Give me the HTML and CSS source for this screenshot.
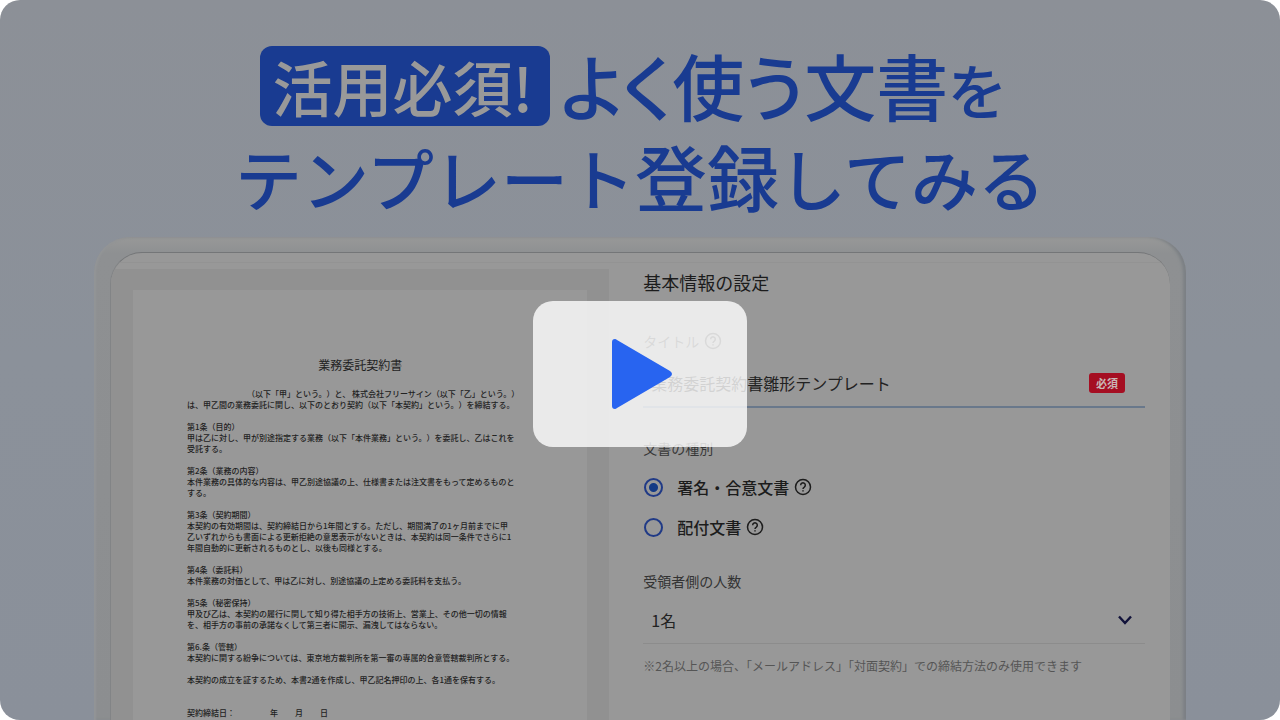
FILE: index.html
```html
<!DOCTYPE html>
<html lang="ja">
  <head>
    <meta charset="UTF-8" />
    <meta name="viewport" content="width=device-width, initial-scale=1.0" />
    <title>よく使う文書をテンプレート登録してみる</title>
    <link rel="stylesheet" href="styles.css" />
  </head>
  <body>
    <main class="player">
      <h1 class="headline">
        <span class="headline-row first">
          <span class="tag">活用必須!</span>
          <span>よく使う文書<span class="small">を</span></span>
        </span>
        <span class="headline-row second">
          <span>テンプレート<span class="kanji">登録</span>してみる</span>
        </span>
      </h1>

      <div class="tablet">
        <div class="screen">
          <!-- contract preview -->
          <section class="preview">
            <article class="paper">
              <h2>業務委託契約書</h2>
              <p><span class="blank"></span>（以下「甲」という。）と、 株式会社フリーサイン（以下「乙」という。）<br />は、甲乙間の業務委託に関し、以下のとおり契約（以下「本契約」という。）を締結する。</p>
              <p>第1条（目的）<br />甲は乙に対し、甲が別途指定する業務（以下「本件業務」という。）を委託し、乙はこれを<br />受託する。</p>
              <p>第2条（業務の内容）<br />本件業務の具体的な内容は、甲乙別途協議の上、仕様書または注文書をもって定めるものと<br />する。</p>
              <p>第3条（契約期間）<br />本契約の有効期間は、契約締結日から1年間とする。ただし、期間満了の1ヶ月前までに甲<br />乙いずれからも書面による更新拒絶の意思表示がないときは、本契約は同一条件でさらに1<br />年間自動的に更新されるものとし、以後も同様とする。</p>
              <p>第4条（委託料）<br />本件業務の対価として、甲は乙に対し、別途協議の上定める委託料を支払う。</p>
              <p>第5条（秘密保持）<br />甲及び乙は、本契約の履行に関して知り得た相手方の技術上、営業上、その他一切の情報<br />を、相手方の事前の承諾なくして第三者に開示、漏洩してはならない。</p>
              <p>第6.条（管轄）<br />本契約に関する紛争については、東京地方裁判所を第一審の専属的合意管轄裁判所とする。</p>
              <p>本契約の成立を証するため、本書2通を作成し、甲乙記名押印の上、各1通を保有する。</p>
              <p class="date"><span>契約締結日：</span><span>年</span><span>月</span><span>日</span></p>
            </article>
          </section>

          <!-- settings form -->
          <form class="settings">
            <h2>基本情報の設定</h2>

            <div class="label-row">
              <label for="docTitle">タイトル</label>
              <svg class="help" viewBox="0 0 18 18">
                <circle cx="9" cy="9" r="7.5" />
                <path d="M6.7 7.2a2.3 2.3 0 1 1 3.6 1.9c-.8.5-1.3 1-1.3 2M9 12.3v1.2" />
              </svg>
            </div>
            <div class="field title-field">
              <input type="text" id="docTitle" value="業務委託契約書雛形テンプレート" />
              <span class="required">必須</span>
            </div>

            <fieldset>
              <legend>文書の種別</legend>
              <div class="option">
                <input type="radio" name="kind" id="kindSign" checked />
                <label for="kindSign">署名・合意文書</label>
                <svg class="help" viewBox="0 0 18 18">
                  <circle cx="9" cy="9" r="7.5" />
                  <path d="M6.7 7.2a2.3 2.3 0 1 1 3.6 1.9c-.8.5-1.3 1-1.3 2M9 12.3v1.2" />
                </svg>
              </div>
              <div class="option">
                <input type="radio" name="kind" id="kindShare" />
                <label for="kindShare">配付文書</label>
                <svg class="help" viewBox="0 0 18 18">
                  <circle cx="9" cy="9" r="7.5" />
                  <path d="M6.7 7.2a2.3 2.3 0 1 1 3.6 1.9c-.8.5-1.3 1-1.3 2M9 12.3v1.2" />
                </svg>
              </div>
            </fieldset>

            <label class="count-label" for="count">受領者側の人数</label>
            <div class="field count-field">
              <select id="count">
                <option>1名</option>
              </select>
              <svg class="chevron" viewBox="0 0 16 16">
                <path d="M2 4.5l6 6.5 6-6.5" />
              </svg>
            </div>
            <p class="note">※2名以上の場合、「メールアドレス」「対面契約」での締結方法のみ使用できます</p>
          </form>
        </div>
      </div>

      <div class="overlay">
        <button class="play" type="button" aria-label="再生">
          <svg viewBox="0 0 60 70">
            <path d="M0 3Q0 0 3 0Q4 0 5 1L58 32Q60 33.500 60 35Q60 36.500 58 38L5 69Q4 70 3 70Q0 70 0 67Z" />
          </svg>
        </button>
      </div>
    </main>
  </body>
</html>
```

FILE: styles.css
```css
* {
  box-sizing: border-box;
}
body {
  margin: 0;
  background-color: #fff;
  font-family: "Noto Sans CJK JP", sans-serif;
  color: #1c1c1c;
}
h1,
h2,
p {
  margin: 0;
  font-weight: 400;
}
.player {
  position: relative;
  display: flex;
  flex-direction: column;
  height: 100vh;
  overflow: hidden;
  border-radius: 20px;
  background: linear-gradient(#8c9097, #8b919a 50%, #8a909a);
}

/* headline */
.headline {
  display: flex;
  flex-direction: column;
  align-items: center;
  padding-top: 41px;
  color: #193b91;
  font-size: 72px;
  font-weight: 500;
  line-height: 90px;
  white-space: nowrap;
}
.headline-row {
  display: flex;
  align-items: center;
  gap: 10px;
  height: 90px;
}
.first {
  padding-right: 16px;
  font-feature-settings: "palt";
}
.second {
  font-size: 67px;
}
.kanji {
  font-size: 72px;
}
.tag {
  padding: 0 17px 0 12px;
  border-radius: 12px;
  background-color: #193b91;
  color: #999;
  font-size: 60px;
  line-height: 80px;
}
.small {
  font-size: 60px;
}

/* tablet */
.tablet {
  flex: 1;
  min-height: 0;
  margin: 16px 94px 0;
  padding: 15px 16px 0;
  border-radius: 36px 36px 0 0;
  background: linear-gradient(#989898, #8e9092 16px, #8c8e90);
  box-shadow: inset 2px 0 2px #939597, inset -3px 0 3px #7c8085;
}
.screen {
  display: grid;
  grid-template-columns: minmax(0, 8fr) minmax(0, 9fr);
  height: 100%;
  overflow: hidden;
  border-top: 1px solid #747678;
  border-left: 1px solid #828486;
  border-radius: 32px 32px 0 0;
  background: linear-gradient(#989898 9px, #939393 9px, #939393 10px, #989898 10px);
}
.preview {
  margin-top: 16px;
  padding: 21px 22px 0;
  background-color: #919191;
}
.paper {
  min-height: 480px;
  padding: 64px 54px 0;
  background-color: #989898;
  color: #222;
  font-size: 8px;
  font-weight: 500;
  line-height: 11px;
  text-spacing-trim: space-all;
  white-space: nowrap;
}
.paper h2 {
  margin-bottom: 12px;
  font-size: 12px;
  line-height: 22px;
  text-align: center;
}
.paper p {
  margin-bottom: 11px;
  font-weight: 500;
}
.blank {
  display: inline-block;
  width: 60px;
}
.paper .date {
  display: flex;
  gap: 17px;
  padding-top: 11px;
}
.date span:first-child {
  margin-right: 18px;
}

/* settings form */
.settings {
  padding: 15px 25px 0 34px;
}
.settings h2 {
  margin-bottom: 31px;
  font-size: 18px;
  line-height: 28px;
}
.label-row,
.option {
  display: flex;
  align-items: center;
  gap: 5px;
}
.label-row {
  height: 28px;
  color: #444;
  font-size: 14px;
}
.help {
  width: 18px;
  height: 18px;
  fill: none;
  stroke: currentColor;
  stroke-width: 1.5;
}
.field {
  display: flex;
  align-items: center;
  height: 53px;
  padding-top: 4px;
}
.title-field {
  padding-right: 20px;
  border-bottom: 2px solid #69788b;
}
.field input,
.field select {
  flex: 1;
  padding: 0 0 0 8px;
  border: 0;
  background: none;
  color: #222;
  font-family: inherit;
  font-size: 16px;
  appearance: none;
  outline: none;
}
.required {
  padding: 0 7px;
  border-radius: 3px;
  background-color: #a50e22;
  color: #c9b5b5;
  font-size: 11px;
  font-weight: 700;
  line-height: 20px;
}
fieldset {
  margin: 0;
  padding: 0;
  border: 0;
}
legend {
  padding: 30px 0 9px;
  color: #383838;
  font-size: 14px;
  line-height: 20px;
}
.option {
  height: 40px;
  font-size: 16px;
  font-weight: 500;
}
.option input {
  width: 19px;
  height: 19px;
  margin: 0 9px 0 1px;
  border: 2px solid #203a86;
  border-radius: 50%;
  appearance: none;
}
.option input:checked {
  background: radial-gradient(circle, #143a85 4px, transparent 5px);
}
.count-label {
  display: block;
  margin-top: 24px;
  color: #333;
  font-size: 14px;
  line-height: 20px;
}
.count-field {
  padding-top: 6px;
  padding-right: 12px;
  border-bottom: 1px solid #8c8c8c;
}
.chevron {
  width: 16px;
  height: 16px;
  fill: none;
  stroke: #11123a;
  stroke-width: 2.4;
}
.note {
  margin-top: 12px;
  color: #555;
  font-size: 12px;
  line-height: 20px;
  white-space: nowrap;
}

/* play button lies over the whole frame */
.overlay {
  position: absolute;
  inset: 0;
  display: flex;
  align-items: center;
  justify-content: center;
  padding-top: 28px;
}
.play {
  display: flex;
  align-items: center;
  justify-content: center;
  width: 214px;
  height: 146px;
  padding: 0 0 0 4px;
  border: 0;
  border-radius: 20px;
  background-color: rgba(255, 255, 255, 0.8);
  cursor: pointer;
}
.play svg {
  width: 60px;
  height: 70px;
  fill: #2864f0;
}
```
